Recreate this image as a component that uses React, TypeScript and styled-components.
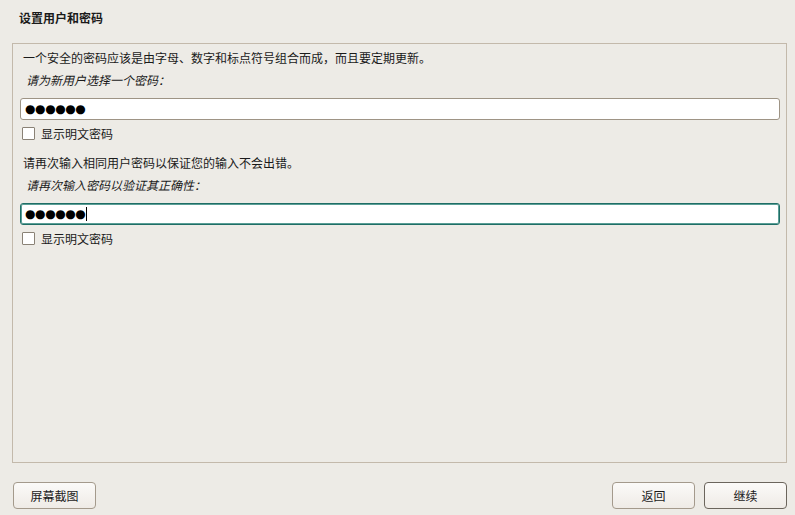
import React from "react";
import styled, { createGlobalStyle } from "styled-components";

const Global = createGlobalStyle`
  html, body { margin: 0; padding: 0; background: #edebe6; }
  body { font-family: "DejaVu Sans", "Noto Sans CJK SC", sans-serif; font-size: 12px; color: #1a1a1a; }
  * { box-sizing: border-box; }
`;

const Page = styled.div`
  width: 795px;
  height: 515px;
  display: flex;
  flex-direction: column;
  padding: 0 8px 6px 12px;
`;

const Title = styled.div`
  height: 43px;
  display: flex;
  align-items: center;
  padding: 0 0 8px 7px;
  font-weight: bold;
  font-size: 12px;
  font-family: "Noto Sans CJK SC", sans-serif;
`;

const Panel = styled.div`
  height: 420px;
  border: 1px solid #c3b9ab;
  padding: 4px 6px 0 7px;
  display: flex;
  flex-direction: column;
`;

const Line = styled.div<{ $italic?: boolean; $gapTop?: number }>`
  height: 18px;
  display: flex;
  align-items: center;
  padding-left: ${(p) => (p.$italic ? 6 : 3)}px;
  margin-top: ${(p) => p.$gapTop ?? 0}px;
  font-style: ${(p) => (p.$italic ? "italic" : "normal")};
  font-family: "Noto Sans CJK SC", sans-serif;
  font-size: 12px;
`;

const Field = styled.div<{ $focused?: boolean; $gapTop: number }>`
  height: 22px;
  margin-top: ${(p) => p.$gapTop}px;
  background: #fff;
  border: 1px solid ${(p) => (p.$focused ? "#1f6e66" : "#9e9485")};
  box-shadow: ${(p) => (p.$focused ? "inset 0 0 0 1px #5a9e96" : "none")};
  border-radius: 3px;
  display: flex;
  align-items: center;
  padding-left: 4px;
`;

const Dots = styled.span`
  font-family: "DejaVu Sans", sans-serif;
  font-size: 12px;
  letter-spacing: -0.4px;
  color: #000;
  line-height: 1;
`;

const Caret = styled.span`
  display: inline-block;
  width: 1px;
  height: 14px;
  background: #000;
  margin-left: 1px;
`;

const CheckRow = styled.label`
  height: 18px;
  margin-top: 4px;
  display: flex;
  align-items: center;
  padding-left: 2px;
  gap: 6px;
  font-family: "Noto Sans CJK SC", sans-serif;
  font-size: 12px;
`;

const Box = styled.span`
  width: 13px;
  height: 13px;
  border: 1px solid #8a8276;
  background: #fff;
  border-radius: 1px;
`;

const Footer = styled.div`
  flex: 1;
  display: flex;
  align-items: flex-end;
  gap: 9px;
  padding-left: 1px;
`;

const Spacer = styled.div`
  flex: 1;
`;

const Button = styled.button<{ $default?: boolean }>`
  width: 83px;
  height: 27px;
  border-radius: 4px;
  border: 1px solid ${(p) => (p.$default ? "#6b655c" : "#a49a8c")};
  background: linear-gradient(#fbfaf8, #efebe6);
  font-family: "Noto Sans CJK SC", sans-serif;
  font-size: 12px;
  color: #1a1a1a;
  padding: 0;
  margin: 0;
`;

export default function App() {
  return (
    <>
      <Global />
      <Page>
        <Title>设置用户和密码</Title>
        <Panel>
          <Line>一个安全的密码应该是由字母、数字和标点符号组合而成，而且要定期更新。</Line>
          <Line $italic $gapTop={4}>请为新用户选择一个密码：</Line>
          <Field $gapTop={10}>
            <Dots>●●●●●●</Dots>
          </Field>
          <CheckRow>
            <Box />
            显示明文密码
          </CheckRow>
          <Line $gapTop={11}>请再次输入相同用户密码以保证您的输入不会出错。</Line>
          <Line $italic $gapTop={4}>请再次输入密码以验证其正确性：</Line>
          <Field $focused $gapTop={10}>
            <Dots>●●●●●●</Dots>
            <Caret />
          </Field>
          <CheckRow>
            <Box />
            显示明文密码
          </CheckRow>
        </Panel>
        <Footer>
          <Button>屏幕截图</Button>
          <Spacer />
          <Button>返回</Button>
          <Button $default>继续</Button>
        </Footer>
      </Page>
    </>
  );
}
